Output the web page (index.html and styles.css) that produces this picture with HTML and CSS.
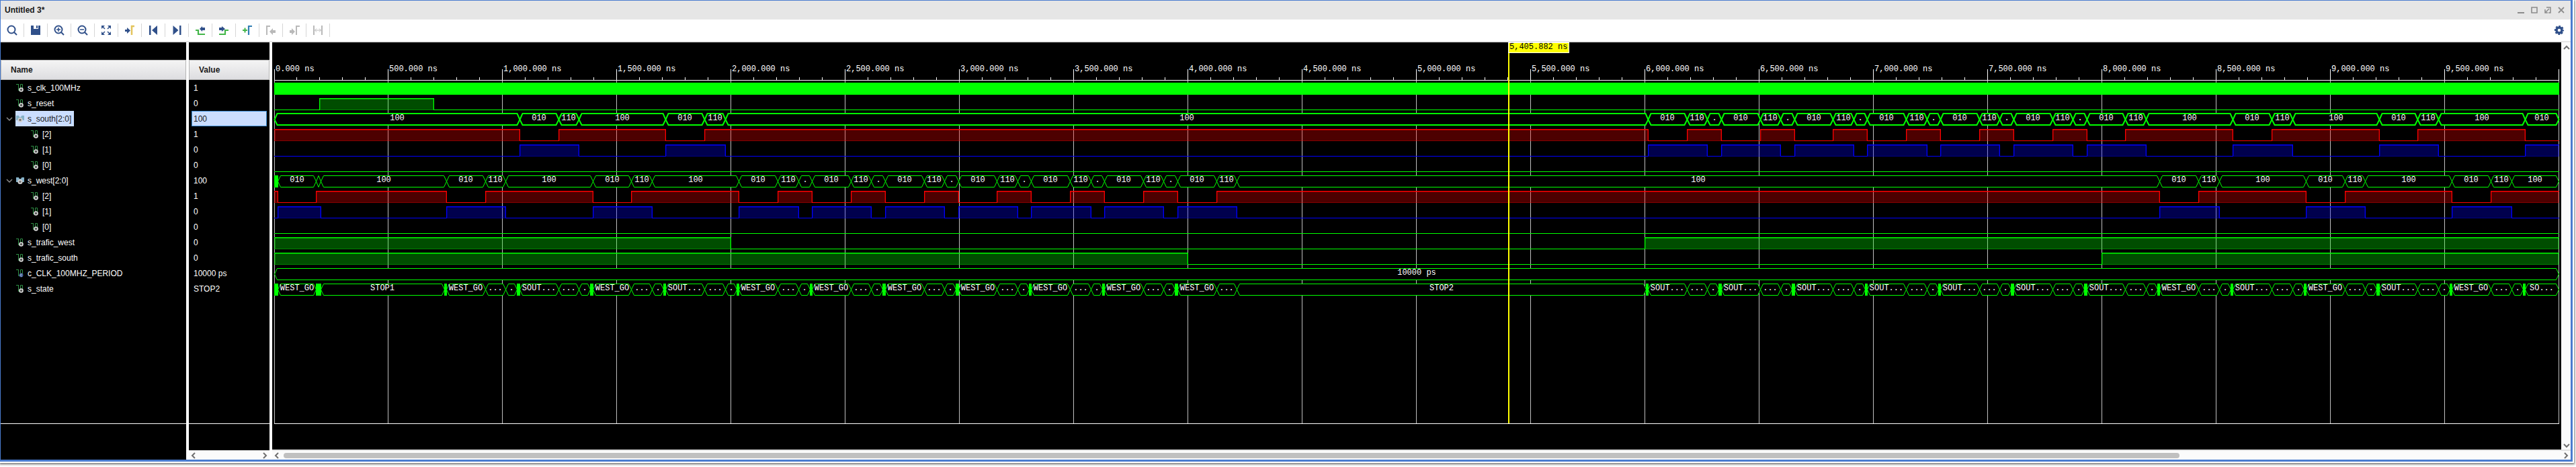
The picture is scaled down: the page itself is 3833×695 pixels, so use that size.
FILE: index.html
```html
<!DOCTYPE html>
<html lang="en">
<head>
<meta charset="utf-8">
<title>Untitled 3*</title>
<link rel="stylesheet" href="styles.css">
</head>
<body>
<svg class="defs" aria-hidden="true">
  <symbol id="signal" viewBox="0 0 12 12">
    <path d="M0 .5h4M3.500 0v9.500H6M6.500 10V.5h3V7" fill="none" stroke="#2f8f45"/>
    <circle cx="7.500" cy="8.500" r="2.500" fill="#555" stroke="#dcdcdc" stroke-width="1.600"/>
  </symbol>
  <symbol id="constant" viewBox="0 0 12 12">
    <path d="M0 .5h4M3.500 0v9.500H6M6.500 10V.5h3V7" fill="none" stroke="#2f8f45"/>
    <circle cx="7.500" cy="8.500" r="3" fill="#3c5a94"/>
    <path d="M9 7.500a1.600 1.600 0 1 0 0 2" fill="none" stroke="#b7c4dd"/>
  </symbol>
  <symbol id="bus" viewBox="0 0 12 12">
    <path d="M0 1h4v1l2 1.500L8 2V1h4v7H0z" fill="#86b2c8"/>
    <circle cx="6" cy="7.500" r="2.700" fill="#777" stroke="#d4d4d4" stroke-width="1.800"/>
  </symbol>
  <symbol id="chevron" viewBox="0 0 10 10"><path d="M1 3l4 4 4-4" fill="none" stroke="#8a8a8a" stroke-width="1.500"/></symbol>
  <symbol id="arrow" viewBox="0 0 10 10"><path d="M7 1L3 5l4 4" fill="none" stroke="#707070" stroke-width="2"/></symbol>
</svg>

<main class="window">
  <header class="titlebar">
    <h1>Untitled 3*</h1>
    <div class="window-buttons">
      <button aria-label="Minimize"><svg viewBox="0 0 10 10"><path d="M0 9h10" stroke-width="2"/></svg></button>
      <button aria-label="Maximize"><svg viewBox="0 0 10 10"><path d="M1 1h8v8H1z" stroke-width="1.600"/></svg></button>
      <button aria-label="Float"><svg viewBox="0 0 10 10"><path d="M3 1h6v8H6M7 3L2 8M1 4v5h4" stroke-width="1.500"/></svg></button>
      <button aria-label="Close"><svg viewBox="0 0 10 10"><path d="M1 1l8 8M9 1L1 9" stroke-width="1.800"/></svg></button>
    </div>
  </header>

  <nav class="toolbar" aria-label="Waveform tools">
    <button aria-label="Find"><svg viewBox="0 0 16 16"><circle cx="7" cy="7" r="5.500" class="line"/><path d="M11 11l4 4" class="line"/></svg></button>
    <button aria-label="Save"><svg viewBox="0 0 16 16"><path d="M1 1h4v5h7V1h3v14H1zM9 1h2v4H9z" fill="#30508a"/></svg></button>
    <button aria-label="Zoom in"><svg viewBox="0 0 16 16"><circle cx="7" cy="7" r="5.500" class="line"/><path d="M11 11l4 4" class="line"/><path d="M4 7h6M7 4v6" class="thin"/></svg></button>
    <button aria-label="Zoom out"><svg viewBox="0 0 16 16"><circle cx="7" cy="7" r="5.500" class="line"/><path d="M11 11l4 4" class="line"/><path d="M4 7h6" class="thin"/></svg></button>
    <button aria-label="Zoom fit"><svg viewBox="0 0 16 16"><path d="M1 1h5L1 6zM15 1v5l-5-5zM1 15v-5l5 5zM15 15h-5l5-5z" fill="#30508a"/><path d="M3 3l3 3M13 3l-3 3M3 13l3-3M13 13l-3-3" class="thin"/></svg></button>
    <button aria-label="Zoom to cursor"><svg viewBox="0 0 16 16"><path d="M1 7h3V4l5 4.500L4 13v-3H1z" fill="#30508a"/><path d="M11 15V2h4" stroke="#e3c45c" stroke-width="2.500" fill="none"/></svg></button>
    <button aria-label="Go to start"><svg viewBox="0 0 16 16"><path d="M2 1h2.500v14H2zM14 1v14L6 8z" fill="#30508a"/></svg></button>
    <button aria-label="Go to end"><svg viewBox="0 0 16 16"><path d="M12 1h2.500v14H12zM2.500 1v14l8-7z" fill="#30508a"/></svg></button>
    <button aria-label="Previous transition"><svg viewBox="0 0 16 16"><path d="M1 8h4v6h10" stroke="#43b649" stroke-width="2.200" fill="none"/><path d="M15 4v4h-4v2L7 6l4-4v2z" fill="#30508a"/></svg></button>
    <button aria-label="Next transition"><svg viewBox="0 0 16 16"><path d="M1 14h9V8h5" stroke="#43b649" stroke-width="2.200" fill="none"/><path d="M1 4v4h4v2l5-4-5-4v2z" fill="#30508a"/></svg></button>
    <button aria-label="Add marker"><svg viewBox="0 0 16 16"><path d="M1 8h7M4.500 4.500v7" stroke="#43b649" stroke-width="2" fill="none"/><path d="M10 15V2h5" stroke="#2f7db3" stroke-width="2.200" fill="none"/></svg></button>
    <button aria-label="Previous marker" disabled><svg viewBox="0 0 16 16"><path d="M2 15V2h5" stroke="#b9b9b9" stroke-width="2" fill="none"/><path d="M15 8v4h-4v3L6 10l5-5v3z" fill="#b9b9b9"/></svg></button>
    <button aria-label="Next marker" disabled><svg viewBox="0 0 16 16"><path d="M11 15V2h5" stroke="#b9b9b9" stroke-width="2" fill="none"/><path d="M1 8v4h3v3l5-5-5-5v3z" fill="#b9b9b9"/></svg></button>
    <button aria-label="Swap cursors" disabled><svg viewBox="0 0 16 16"><path d="M2 1v14M14 1v14" stroke="#b9b9b9" stroke-width="2" fill="none"/><path d="M4 8h8M6 5.500L3.500 8 6 10.500M10 5.500L12.500 8 10 10.500" stroke="#b9b9b9" fill="none"/></svg></button>
    <button class="settings" aria-label="Settings"><svg viewBox="0 0 16 16"><circle cx="8" cy="8" r="4" fill="none" stroke="#30508a" stroke-width="3.500"/><circle cx="8" cy="8" r="6" fill="none" stroke="#30508a" stroke-width="2.200" stroke-dasharray="2.700 2.012" stroke-dashoffset="1.350"/></svg></button>
  </nav>

  <div class="panes">
    <section class="pane names">
      <table>
        <thead><tr><th scope="col">Name</th></tr></thead>
        <tbody>
          <tr><td><span class="cell"><svg class="icon"><use href="#signal"/></svg>s_clk_100MHz</span></td></tr>
          <tr><td><span class="cell"><svg class="icon"><use href="#signal"/></svg>s_reset</span></td></tr>
          <tr><td><button class="twist" aria-label="Collapse s_south"><svg><use href="#chevron"/></svg></button><span class="cell selected"><svg class="icon"><use href="#bus"/></svg>s_south[2:0]</span></td></tr>
          <tr class="child"><td><span class="cell"><svg class="icon"><use href="#signal"/></svg>[2]</span></td></tr>
          <tr class="child"><td><span class="cell"><svg class="icon"><use href="#signal"/></svg>[1]</span></td></tr>
          <tr class="child"><td><span class="cell"><svg class="icon"><use href="#signal"/></svg>[0]</span></td></tr>
          <tr><td><button class="twist" aria-label="Collapse s_west"><svg><use href="#chevron"/></svg></button><span class="cell"><svg class="icon"><use href="#bus"/></svg>s_west[2:0]</span></td></tr>
          <tr class="child"><td><span class="cell"><svg class="icon"><use href="#signal"/></svg>[2]</span></td></tr>
          <tr class="child"><td><span class="cell"><svg class="icon"><use href="#signal"/></svg>[1]</span></td></tr>
          <tr class="child"><td><span class="cell"><svg class="icon"><use href="#signal"/></svg>[0]</span></td></tr>
          <tr><td><span class="cell"><svg class="icon"><use href="#signal"/></svg>s_trafic_west</span></td></tr>
          <tr><td><span class="cell"><svg class="icon"><use href="#signal"/></svg>s_trafic_south</span></td></tr>
          <tr><td><span class="cell"><svg class="icon"><use href="#constant"/></svg>c_CLK_100MHZ_PERIOD</span></td></tr>
          <tr><td><span class="cell"><svg class="icon"><use href="#signal"/></svg>s_state</span></td></tr>
        </tbody>
      </table>
      <div class="filler"></div>
      <div class="foot"></div>
    </section>

    <section class="pane values">
      <table>
        <thead><tr><th scope="col">Value</th></tr></thead>
        <tbody>
          <tr><td><span class="cell">1</span></td></tr>
          <tr><td><span class="cell">0</span></td></tr>
          <tr><td><span class="cell selected">100</span></td></tr>
          <tr><td><span class="cell">1</span></td></tr>
          <tr><td><span class="cell">0</span></td></tr>
          <tr><td><span class="cell">0</span></td></tr>
          <tr><td><span class="cell">100</span></td></tr>
          <tr><td><span class="cell">1</span></td></tr>
          <tr><td><span class="cell">0</span></td></tr>
          <tr><td><span class="cell">0</span></td></tr>
          <tr><td><span class="cell">0</span></td></tr>
          <tr><td><span class="cell">0</span></td></tr>
          <tr><td><span class="cell">10000 ps</span></td></tr>
          <tr><td><span class="cell">STOP2</span></td></tr>
        </tbody>
      </table>
      <div class="filler"></div>
      <div class="foot"></div>
      <div class="hscroll">
        <button aria-label="Scroll left"><svg><use href="#arrow"/></svg></button>
        <button aria-label="Scroll right"><svg class="flip"><use href="#arrow"/></svg></button>
      </div>
    </section>

    <section class="waves">
      <div class="view">
        <div class="canvas"><svg id="wave" role="img" aria-label="Waveforms"></svg></div>
        <div class="vscroll">
          <button aria-label="Scroll up"><svg class="up"><use href="#arrow"/></svg></button>
          <button aria-label="Scroll down"><svg class="down"><use href="#arrow"/></svg></button>
        </div>
      </div>
      <div class="hscroll">
        <button aria-label="Scroll left"><svg><use href="#arrow"/></svg></button>
        <div class="track"><div class="thumb"></div></div>
        <button aria-label="Scroll right"><svg class="flip"><use href="#arrow"/></svg></button>
      </div>
    </section>
  </div>
</main>
<script src="wave.js"></script>
</body>
</html>
```

FILE: styles.css
```css
* { box-sizing: border-box; }

body {
  display: flex;
  height: 100vh;
  margin: 0;
  padding: 0 5px 8px 0;
  overflow: hidden;
  background: #fff;
  font: 12px "Liberation Sans", Arial, sans-serif;
  color: #1a1a1a;
}

button {
  display: flex;
  align-items: center;
  justify-content: center;
  margin: 0;
  padding: 0;
  border: 0;
  background: none;
}

.defs {
  position: absolute;
  width: 0;
  height: 0;
}

.window {
  display: flex;
  flex: 1;
  flex-direction: column;
  min-width: 0;
  border: 1px solid #4a7ccf;
  border-width: 1px 3px 3px 1px;
  background: #fff;
  box-shadow: 0 0 0 2px #fff, 1px 2px 3px 2px #777;
}

.titlebar {
  display: flex;
  align-items: center;
  justify-content: space-between;
  height: 28px;
  padding: 0 9px 0 6px;
  background: #e6e6e6;
}

.titlebar h1 {
  margin: 0;
  font-size: 12px;
}

.window-buttons {
  display: flex;
  gap: 10px;
}

.window-buttons svg {
  display: block;
  width: 10px;
  height: 10px;
  fill: none;
  stroke: #8c8c8c;
}

.toolbar {
  display: flex;
  align-items: center;
  height: 34px;
  border-bottom: 2px solid #e6e6e6;
}

.toolbar button {
  width: 35px;
  height: 20px;
  border-right: 1px solid #d6d6d6;
}

.toolbar .settings {
  width: 34px;
  margin-left: auto;
  border: 0;
}

.toolbar svg {
  width: 16px;
  height: 16px;
}

.line {
  fill: none;
  stroke: #30508a;
  stroke-width: 2;
}

.thin {
  fill: none;
  stroke: #30508a;
  stroke-width: 1.500;
}

.panes {
  display: flex;
  flex: 1;
  gap: 4px;
  min-height: 0;
}

.pane {
  display: flex;
  flex: none;
  flex-direction: column;
  padding-top: 26px;
  background: #000;
  color: #fff;
}

.names { width: 276px; }
.values { width: 120px; }

.pane table {
  width: 100%;
  border-spacing: 0;
}

.pane th {
  height: 30px;
  padding: 0 14px;
  border: 1px solid #b4b4b4;
  background: linear-gradient(#f4f4f4, #dddde0);
  color: #1a1a1a;
  font-size: 12px;
  text-align: left;
}

.pane td {
  height: 23px;
  padding: 0;
}

.names td {
  position: relative;
  padding-left: 22px;
}

.names .child td { padding-left: 44px; }

.values td { padding: 0 4px; }

.cell {
  display: inline-flex;
  align-items: center;
  height: 23px;
  gap: 5px;
  vertical-align: top;
}

.names .cell { padding: 0 4px 0 1px; }

.values .cell {
  display: flex;
  padding-left: 3px;
}

.cell.selected {
  background: #cbdeff;
  color: #1a1a1a;
}

.values .selected {
  padding-left: 2px;
  border: 1px solid #3f8fd6;
}

.icon {
  width: 12px;
  height: 12px;
}

.twist {
  position: absolute;
  left: 8px;
  height: 23px;
}

.twist svg,
.hscroll svg,
.vscroll svg {
  width: 10px;
  height: 10px;
}

.filler {
  flex: 1;
  border-bottom: 1px solid #fff;
}

.foot { height: 53px; }
.values .foot { height: 39px; }

.waves {
  display: flex;
  flex: 1;
  flex-direction: column;
  min-width: 0;
}

.view {
  display: flex;
  flex: 1;
  min-height: 0;
}

.canvas {
  flex: 1;
  min-width: 0;
  overflow: hidden;
  background: #000;
}

.canvas svg {
  display: block;
  width: 100%;
  height: 100%;
}

.canvas text {
  fill: #fff;
  font: 12px "Liberation Mono", "Courier New", monospace;
  white-space: pre;
}

.canvas .cursor-time { fill: #000; }

.vscroll {
  display: flex;
  flex-direction: column;
  justify-content: space-between;
  width: 14px;
  padding: 3px 0 1px 2px;
  background: #fbfbfb;
}

.hscroll {
  display: flex;
  align-items: center;
  justify-content: space-between;
  height: 14px;
  padding: 0 2px;
  border-top: 1px solid #e2e2e2;
  background: #fbfbfb;
}

.waves .hscroll {
  height: 15px;
  border-top-width: 2px;
}

.track {
  flex: 1;
  margin: 0 4px 0 5px;
}

.thumb {
  width: 83.3%;
  height: 8px;
  border-radius: 4px;
  background: #c0c0c0;
}

.flip { transform: rotate(180deg); }
.up { transform: rotate(90deg); }
.down { transform: rotate(270deg); }
```

FILE: wave.js
```js
const NS = 'http://www.w3.org/2000/svg';
const svg = document.getElementById('wave');
const GREEN = '#00ff00';
const RED = '#ff0000';
const BLUE = '#0000ff';
const END = 10000;
const CURSOR = 5405.882;
const ROW = 23;
const AXIS = 56;

// Start times in ns of each green-light phase.
const southShort = [6015, 6335, 6655, 6975, 7295, 7615];
const westShort = [2035, 2355, 2675, 2995, 3315, 3635];

function lights(longStarts, shortStarts) {
  const events = [];
  for (const t of [...longStarts, ...shortStarts]) {
    events.push([t, '010'], [t + 170, '110'], [t + 260, '100']);
  }
  return events.filter(e => e[0] < END).sort((a, b) => a[0] - b[0]);
}

const south = [[0, '100'], ...lights([1075, 1715, 7935, 8575, 9215, 9855], southShort)];
const west = [[0, null], [15, '010'], [185, '110'], [205, '100'],
  ...lights([755, 1395, 3955, 8255, 8895, 9535], westShort)];

function states() {
  const events = [[0, null], [15, 'WEST_GO'], [185, null], [205, 'STOP1'], [745, null]];
  const starts = [];
  for (const t of [755, 1395, ...westShort, 3955, 8255, 8895, 9535]) starts.push([t, 'WEST_GO']);
  for (const t of [1075, 1715, ...southShort, 7935, 8575, 9215]) starts.push([t, 'SOUT...']);
  for (const [t, name] of starts) {
    events.push([t, name], [t + 170, '...']);
    if (t === 3955) events.push([4215, 'STOP2'], [6005, null]);
    else events.push([t + 260, '.'], [t + 310, null]);
  }
  events.push([9855, 'SO...']);
  return events.sort((a, b) => a[0] - b[0]);
}

// Intervals during which one bit of a bus is high.
function bit(events, index) {
  const out = [];
  events.forEach(([t, v], i) => {
    const end = i + 1 < events.length ? events[i + 1][0] : END;
    const high = v === null ? index === 0 : v[index] === '1';
    if (!high) return;
    const last = out[out.length - 1];
    if (last && last[1] === t) last[1] = end;
    else out.push([t, end]);
  });
  return out;
}

function add(tag, attrs, text) {
  const el = document.createElementNS(NS, tag);
  for (const k in attrs) el.setAttribute(k, attrs[k]);
  if (text !== undefined) el.textContent = text;
  svg.appendChild(el);
}

function rect(x, y, width, height, fill, opacity = 1) {
  if (width > 0) add('rect', { x, y, width, height, fill, opacity });
}

function draw() {
  const width = svg.parentNode.clientWidth;
  const height = svg.parentNode.clientHeight;
  const scale = (width - 7) / END;
  const X = t => Math.floor(3 + t * scale);
  const bottom = height - 39;
  svg.replaceChildren();

  for (let t = 0; t <= END; t += 500) rect(X(t), AXIS + 1, 1, bottom - AXIS - 1, '#c0c0c0');
  rect(3, bottom, width - 6, 1, '#fff');

  const levels = (row, color, highs) => {
    const y = AXIS + row * ROW;
    let from = 0;
    for (const [a, b] of [...highs, [END, END]]) {
      if (a > from) rect(X(from), y + 21, X(a) - X(from) + 1, 1, color);
      if (a < b) {
        const x0 = X(a);
        const x1 = X(b);
        rect(x0, y + 4, x1 - x0, 18, color, 0.3);
        rect(x0, y + 4, x1 - x0 + 1, 1, color);
        rect(x0, y + 5, x1 - x0, 1, color, 0.5);
        rect(x0, y + 21, x1 - x0, 1, color, 0.3);
        rect(x0, y + 4, 1, 18, color, a ? 1 : 0.3);
        rect(x0 + 1, y + 5, 1, 16, color, 0.3);
        rect(x1 - 1, y + 5, 1, 16, color, 0.3);
        rect(x1, y + 4, 1, 18, color, b < END ? 1 : 0.3);
      }
      from = b;
    }
  };

  const bus = (row, events, strong) => {
    const y = AXIS + row * ROW;
    const top = strong ? y + 4 : y + 4.5;
    const low = strong ? y + 21 : y + 21.5;
    const mid = y + 13;
    events.forEach(([t, v], i) => {
      const x0 = X(t);
      const x1 = X(i + 1 < events.length ? events[i + 1][0] : END);
      if (v === null) {
        rect(x0, y + 4, x1 - x0 + 1, 18, GREEN);
        return;
      }
      const a = x0 + 0.5;
      const b = x1 + 0.5;
      const s = Math.min(4, (b - a) / 2);
      add('path', {
        d: `M${a} ${mid}L${a + s} ${top}H${b - s}L${b} ${mid}L${b - s} ${low}H${a + s}Z`,
        fill: '#000', stroke: GREEN, 'stroke-width': strong ? 2 : 1
      });
      // Values too wide for their segment collapse to a dot.
      const room = x1 - x0;
      const label = room < 26 ? '.' : v;
      if (room > 12) add('text', { x: Math.round((x0 + x1) / 2), y: y + 14, 'text-anchor': 'middle' }, label);
    });
  };

  rect(3, AXIS + 4, X(END) - 2, 18, GREEN);
  levels(1, GREEN, [[200, 700]]);
  bus(2, south, true);
  levels(3, RED, bit(south, 0));
  levels(4, BLUE, bit(south, 1));
  levels(5, GREEN, []);
  bus(6, west, false);
  levels(7, RED, bit(west, 0));
  levels(8, BLUE, bit(west, 1));
  levels(9, GREEN, []);
  levels(10, GREEN, [[0, 2000], [6000, END]]);
  levels(11, GREEN, [[0, 4000], [8000, END]]);
  bus(12, [[0, '10000 ps']], false);
  bus(13, states(), false);

  rect(3, AXIS, width - 6, 1, '#fff');
  for (let t = 0; t <= END; t += 100) {
    const major = t % 500 === 0;
    rect(X(t), AXIS - (major ? 16 : 4), 1, major ? 16 : 4, '#fff');
    if (major && t < END) {
      const label = t.toLocaleString('en-US', { minimumFractionDigits: 3 }) + ' ns';
      add('text', { x: X(t) + 2, y: 43 }, label);
    }
  }

  const c = X(CURSOR) - 1;
  rect(c, 16, 2, bottom - 16, '#ffff00');
  rect(c, 0, 91, 16, '#fff');
  rect(c + 1, 1, 89, 14, '#ffff00');
  add('text', { x: c + 2, y: 10, class: 'cursor-time' }, '5,405.882 ns');
}

draw();
window.addEventListener('resize', draw);
```
